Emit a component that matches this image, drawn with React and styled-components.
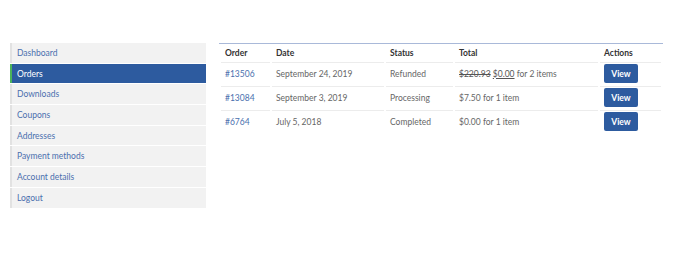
import React from "react"
import styled, { createGlobalStyle } from "styled-components"

const GlobalStyle = createGlobalStyle`
  body {
    margin: 0;
    background: #ffffff;
    font-family: Lato, "Liberation Sans", Arial, sans-serif;
  }
`

const Page = styled.div`
  display: flex;
  align-items: flex-start;
  gap: 13px;
  padding: 43px 0 0 10px;
  width: 688px;
  height: 261px;
  box-sizing: border-box;
`

const Nav = styled.ul`
  display: flex;
  flex-direction: column;
  gap: 1px;
  width: 196px;
  margin: 0;
  padding: 0;
  list-style: none;
`

const NavItem = styled.li`
  display: flex;
  align-items: center;
  height: 19.7px;
  padding-left: 5px;
  background: ${props => (props.active ? "#2d5b9f" : "#f2f2f2")};
  border-left: 2px solid ${props => (props.active ? "#4bb35a" : "#e2e2e2")};
  color: ${props => (props.active ? "#ffffff" : "#4a6fae")};
  font-size: 8.5px;
`

const Table = styled.table`
  width: 444px;
  border-collapse: separate;
  border-spacing: 2px 0;
  border-top: 1px solid #a9b9d9;
  font-size: 8.5px;
  color: #666666;
`

const Th = styled.th`
  height: 18px;
  padding: 0 4px;
  text-align: left;
  font-weight: 700;
  color: #333333;
  width: ${props => props.w}px;
`

const Td = styled.td`
  height: 21px;
  padding: 0 4px 2px;
  border-top: 1px solid #ececec;
  vertical-align: middle;
`

const OrderLink = styled.span`
  color: #4a6fae;
`

const Old = styled.del`
  color: #555555;
`

const New = styled.span`
  text-decoration: underline;
  color: #555555;
`

const ViewButton = styled.button`
  width: 34px;
  height: 19px;
  border: none;
  border-radius: 2px;
  background: #2d5b9f;
  color: #ffffff;
  font-family: inherit;
  font-size: 8.5px;
  font-weight: 700;
  padding: 0;
`

const navItems = [
  "Dashboard",
  "Orders",
  "Downloads",
  "Coupons",
  "Addresses",
  "Payment methods",
  "Account details",
  "Logout"
]

const orders = [
  { id: "#13506", date: "September 24, 2019", status: "Refunded", old: "$220.93", total: "$0.00", note: "for 2 items" },
  { id: "#13084", date: "September 3, 2019", status: "Processing", total: "$7.50", note: "for 1 item" },
  { id: "#6764", date: "July 5, 2018", status: "Completed", total: "$0.00", note: "for 1 item" }
]

export default function App() {
  return (
    <Page>
      <GlobalStyle />
      <Nav>
        {navItems.map(item => (
          <NavItem key={item} active={item === "Orders"}>{item}</NavItem>
        ))}
      </Nav>
      <Table>
        <thead>
          <tr>
            <Th w={41}>Order</Th>
            <Th w={104}>Date</Th>
            <Th w={59}>Status</Th>
            <Th w={135}>Total</Th>
            <Th>Actions</Th>
          </tr>
        </thead>
        <tbody>
          {orders.map(o => (
            <tr key={o.id}>
              <Td><OrderLink>{o.id}</OrderLink></Td>
              <Td>{o.date}</Td>
              <Td>{o.status}</Td>
              <Td>
                {o.old ? <><Old>{o.old}</Old> <New>{o.total}</New></> : o.total} {o.note}
              </Td>
              <Td><ViewButton>View</ViewButton></Td>
            </tr>
          ))}
        </tbody>
      </Table>
    </Page>
  )
}
